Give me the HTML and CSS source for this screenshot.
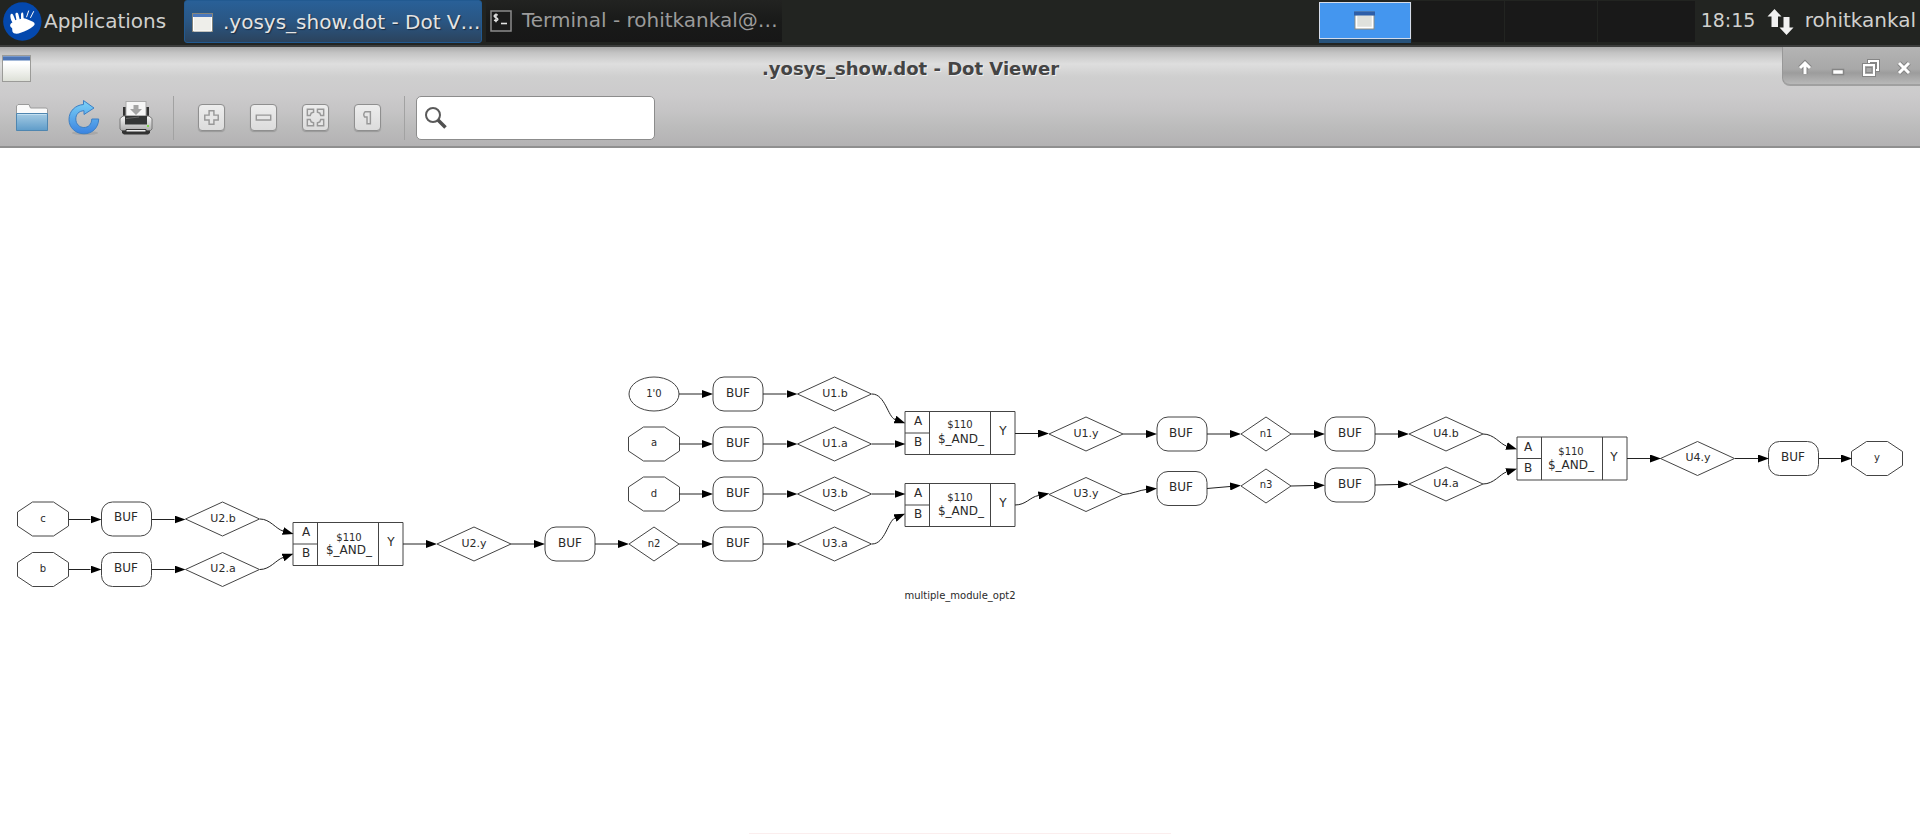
FILE: index.html
```
<!DOCTYPE html>
<html lang="en">
<head>
<meta charset="utf-8">
<title>.yosys_show.dot - Dot Viewer</title>
<link rel="stylesheet" href="styles.css">
</head>
<body>
<header class="panel">
  <button class="apps" type="button">
    <svg class="logo" width="39" height="39" viewBox="9 5 117 118" aria-hidden="true">
      <circle cx="67" cy="64" r="58" fill="#0448ad"/>
      <path d="M36 84C28 79 28 71 37 67C32 58 30 50 31 44C33 39 38 40 40 46L46 60L49 59L46 42C47 36 53 36 55 42L59 57L63 56L63 41C65 35 70 36 70 42L71 54C80 56 90 60 99 65C106 69 106 74 100 78C90 86 76 93 62 98C50 103 40 101 37 94Z" fill="#fff"/>
      <path d="M80 50L86 32M92 52L101 34" stroke="#fff" stroke-width="3" stroke-linecap="round"/>
    </svg>
    <span>Applications</span>
  </button>
  <nav class="tasks" aria-label="Windows">
    <button class="task task-active" type="button">
      <svg width="21" height="20" viewBox="0 0 21 20" aria-hidden="true"><rect x=".5" y=".5" width="20" height="18" fill="#eeeeea" stroke="#85857c"/><path d="M1 2.500h19" stroke="#4a78bd" stroke-width="3"/><path d="M1.500 4v14h18V4" fill="none" stroke="#fff"/></svg>
      <span class="task-label">.yosys_show.dot - Dot V…</span>
    </button>
    <button class="task" type="button">
      <svg width="22" height="22" viewBox="0 0 22 22" aria-hidden="true"><rect x="1" y="1" width="20" height="20" fill="#1b1b1b" stroke="#8c8c8c" stroke-width="1.500"/><path d="M7.800 5C5.500 4.200 4 5 4.200 6.300C4.500 8 7.800 7.400 7.900 9.200C7.900 10.700 5.800 11 4 10.200M6 3.500v8.800" fill="none" stroke="#e4e4e4" stroke-width="1.400"/><path d="M11 13.500h6" stroke="#e4e4e4" stroke-width="1.600"/></svg>
      <span class="task-label">Terminal - rohitkankal@…</span>
    </button>
  </nav>
  <div class="pager">
    <button class="desk desk-active" type="button" aria-label="Workspace 1">
      <svg width="21" height="19" viewBox="0 0 21 19" aria-hidden="true"><rect x="1" y="1" width="19" height="17" fill="#dfe1dc" stroke="#8b8b84"/><path d="M2.500 5v11.500h16V5" fill="none" stroke="#fff" stroke-width="1.500"/><path d="M0 2.500h21" stroke="#2d5ea8" stroke-width="4"/></svg>
    </button>
    <button class="desk" type="button" aria-label="Workspace 2"></button>
    <button class="desk" type="button" aria-label="Workspace 3"></button>
    <button class="desk desk-last" type="button" aria-label="Workspace 4"></button>
  </div>
  <time class="clock">18:15</time>
  <svg class="net" width="27" height="27" viewBox="0 0 27 27" aria-hidden="true"><path d="M7.500 0L14.500 7.500H11V18H4.500V7.500H.5ZM16.500 8H22.500V18.500H26.500L19.500 26L12.500 18.500H16.500Z" fill="#f1f1f1"/></svg>
  <span class="user">rohitkankal</span>
</header>

<div class="chrome">
  <div class="titlebar">
    <svg class="win-icon" width="29" height="27" viewBox="0 0 29 27" aria-hidden="true"><defs><linearGradient id="paper" x2="0" y2="1"><stop offset=".3" stop-color="#fff"/><stop offset="1" stop-color="#dcdfd6"/></linearGradient></defs><rect x=".5" y=".5" width="28" height="26" fill="url(#paper)" stroke="#9b9b98"/><path d="M1 3.500h27" stroke="#4b74b5" stroke-width="4"/><path d="M1 1.500h27" stroke="#7698cb"/></svg>
    <h1 class="title">.yosys_show.dot - Dot Viewer</h1>
    <div class="win-buttons">
      <button type="button" aria-label="Shade"><svg width="18" height="18" viewBox="0 0 18 18"><path class="halo" d="M9 15V5M4 9L9 4L14 9"/><path class="ink" d="M9 15V5M4 9L9 4L14 9"/></svg></button>
      <button type="button" aria-label="Minimize"><svg width="18" height="18" viewBox="0 0 18 18"><rect x="3.500" y="10.500" width="11" height="5" fill="#fff" stroke="#858585" stroke-width="1.500"/></svg></button>
      <button type="button" aria-label="Restore"><svg width="18" height="18" viewBox="0 0 18 18"><path d="M7 4V2H16V11H13.500" fill="none" stroke="#858585" stroke-width="4"/><path d="M7 4V2H16V11H13.500" fill="none" stroke="#fff" stroke-width="2"/><rect x="2" y="6" width="10" height="10" fill="#aaa" stroke="#858585" stroke-width="4"/><rect x="2" y="6" width="10" height="10" fill="#aaa" stroke="#fff" stroke-width="2"/><rect x="4" y="8.500" width="6" height="5" fill="none" stroke="#858585"/></svg></button>
      <button type="button" aria-label="Close"><svg width="18" height="18" viewBox="0 0 18 18"><path class="halo" d="M4 4L14 14M14 4L4 14"/><path class="ink" d="M4 4L14 14M14 4L4 14"/></svg></button>
    </div>
  </div>
  <div class="toolbar" role="toolbar">
    <button class="tool" type="button" aria-label="Open">
      <svg width="34" height="36" viewBox="0 0 34 36"><defs><linearGradient id="blue" x2="0" y2="1"><stop stop-color="#a5cbe3"/><stop offset="1" stop-color="#5f9cc9"/></linearGradient></defs><path d="M1.500 30V6L3 4.500H14L15.500 8H31.500L32.500 9.500V30Z" fill="#fafafa" stroke="#9a9a9a"/><path d="M1.500 13.500H32.500V30.500H1.500Z" fill="url(#blue)" stroke="#4f86b0"/><path d="M2.500 14.500H31.500" stroke="#c3dff0"/></svg>
    </button>
    <button class="tool" type="button" aria-label="Reload">
      <svg width="34" height="38" viewBox="0 0 34 38"><defs><linearGradient id="swirl" x2="0" y2="1"><stop stop-color="#7cd3f7"/><stop offset="1" stop-color="#3b83e0"/></linearGradient></defs><ellipse cx="18" cy="34" rx="13" ry="2" fill="#8f8f8f" opacity=".4"/><path d="M16.500 1.500L27 9L17 15.500V11.700C11.500 12 8.800 15.500 8.800 20C8.800 25 12.500 28.500 16.800 28.500C21.500 28.500 24.500 25.500 24.800 20H31.700C31.500 29 25 34.800 17 34.800C8.500 34.800 2 28.500 2 20.500C2 12 8.500 6 16.500 5.500Z" fill="url(#swirl)" stroke="#3c7fc4"/></svg>
    </button>
    <button class="tool" type="button" aria-label="Print">
      <svg width="34" height="36" viewBox="0 0 34 36"><defs><linearGradient id="body" x2="0" y2="1"><stop stop-color="#fafafa"/><stop offset="1" stop-color="#aaa"/></linearGradient></defs><path d="M4 7H8V17H4ZM26 7H30V17H26Z" fill="#333"/><rect x="7" y="1.500" width="20" height="17" fill="#f6f6f6" stroke="#aaa"/><path d="M14.500 5h5v4h3.500L17 15L11 9H14.500Z" fill="#a4a4a4"/><path d="M1 18.500L4 16H30L33 18.500V29L31 31H3L1 29Z" fill="url(#body)" stroke="#777"/><path d="M6 16H28V24.500H6Z" fill="#343636"/><path d="M7 18.500L20 17" stroke="#666"/><path d="M3 30.500H31V33L29 34.500H5L3 33Z" fill="#333"/><path d="M7 29.500H27V32H7Z" fill="#eee" stroke="#333"/><rect x="28" y="25" width="2" height="2" fill="#7fd84a"/></svg>
    </button>
    <span class="sep"></span>
    <button class="tool" type="button" aria-label="Zoom in"><span class="key"><svg width="26" height="26" viewBox="0 0 26 26"><path d="M10.500 6H15.500V10.500H20V15.500H15.500V20H10.500V15.500H6V10.500H10.500Z"/></svg></span></button>
    <button class="tool" type="button" aria-label="Zoom out"><span class="key"><svg width="26" height="26" viewBox="0 0 26 26"><path d="M5.500 10.500H20.500V15.500H5.500Z"/></svg></span></button>
    <button class="tool" type="button" aria-label="Zoom to fit"><span class="key"><svg width="26" height="26" viewBox="0 0 26 26"><path d="M4.500 4.500H11V7.500L8.500 8.500L7.500 11H4.500ZM21.500 4.500H15V7.500L17.500 8.500L18.500 11H21.500ZM4.500 21.500H11V18.500L8.500 17.500L7.500 15H4.500ZM21.500 21.500H15V18.500L17.500 17.500L18.500 15H21.500Z"/></svg></span></button>
    <button class="tool" type="button" aria-label="Zoom to normal size"><span class="key"><svg width="26" height="26" viewBox="0 0 26 26"><path d="M10.500 7H16V19.500H12.500V12.500H10C9 11 9 8.500 10.500 7Z"/></svg></span></button>
    <span class="sep"></span>
    <label class="search">
      <svg width="24" height="24" viewBox="0 0 24 24" aria-hidden="true"><circle cx="9" cy="9" r="7" fill="none" stroke="#5a5a5a" stroke-width="2"/><path d="M14 14L21.500 21.500" stroke="#505050" stroke-width="3.500"/></svg>
      <input type="search" aria-label="Find">
    </label>
  </div>
</div>

<main class="canvas">
<svg class="graph" viewBox="0 148 1920 684" role="img" aria-label="multiple_module_opt2">
  <defs>
    <path id="oct" d="M-10.500-17H10.500L25.500-7V7L10.500 17H-10.500L-25.500 7V-7Z"/>
    <rect id="buf" x="-25" y="-17" width="50" height="34" rx="11"/>
    <path id="dia" d="M-37 0L0-17L37 0L0 17Z"/>
    <path id="net" d="M-25 0L0-17L25 0L0 17Z"/>
    <path id="cell" d="M0-21.500H110V21.500H0ZM24.500-21.500V21.500M85.500-21.500V21.500M0 0H24.500"/>
    <marker id="arrow" markerUnits="userSpaceOnUse" markerWidth="11" markerHeight="8" refX="0" refY="4" orient="auto"><path d="M0 0L11 4L0 8Z" fill="#000"/></marker>
  </defs>

  <g class="shape">
    <use href="#oct" x="43" y="519"/><use href="#oct" x="43" y="569.500"/>
    <use href="#buf" x="126.500" y="519"/><use href="#buf" x="126.500" y="569.500"/>
    <use href="#dia" x="222.500" y="519"/><use href="#dia" x="222.500" y="569.500"/>
    <use href="#cell" x="293" y="544"/>
    <use href="#dia" x="474" y="544"/><use href="#buf" x="570" y="544"/><use href="#net" x="654" y="544"/>
    <ellipse cx="654" cy="394" rx="25" ry="17"/><use href="#oct" x="654" y="444"/><use href="#oct" x="654" y="494"/>
    <use href="#buf" x="738" y="394"/><use href="#buf" x="738" y="444"/><use href="#buf" x="738" y="494"/><use href="#buf" x="738" y="544"/>
    <use href="#dia" x="834.500" y="394"/><use href="#dia" x="834.500" y="444"/><use href="#dia" x="834.500" y="494"/><use href="#dia" x="834.500" y="544"/>
    <use href="#cell" x="905" y="433"/><use href="#cell" x="905" y="505"/>
    <use href="#dia" x="1086" y="434"/><use href="#dia" x="1086" y="494.500"/>
    <use href="#buf" x="1182" y="434"/><use href="#buf" x="1182" y="488.500"/>
    <use href="#net" x="1266" y="434"/><use href="#net" x="1266" y="486"/>
    <use href="#buf" x="1350" y="434"/><use href="#buf" x="1350" y="485"/>
    <use href="#dia" x="1446" y="434"/><use href="#dia" x="1446" y="484"/>
    <use href="#cell" x="1517" y="458.500"/>
    <use href="#dia" x="1697.500" y="458.500"/><use href="#buf" x="1793.500" y="458.500"/><use href="#oct" x="1877" y="458.500"/>
  </g>

  <g class="edge">
    <path d="M69 519.500H90.500"/><path d="M152 519.500H174.500"/>
    <path d="M69 569.500H90.500"/><path d="M152 569.500H174.500"/>
    <path d="M260 519C270 519 276 529 283 531"/><path d="M260 569.500C270 569.500 276 560 283 557.500"/>
    <path d="M403 544H426"/><path d="M511 544H534"/><path d="M595 544H618"/>
    <path d="M679 394H702"/><path d="M679 444H702"/><path d="M679 494H702"/><path d="M679 544H702"/>
    <path d="M763 394H786.500"/><path d="M763 444H786.500"/><path d="M763 494H786.500"/><path d="M763 544H786.500"/>
    <path d="M872 394C885 394 888 417 895 419.500"/><path d="M872 444H894.500"/><path d="M872 494H894.500"/><path d="M872 544C885 544 888 521 895 518"/>
    <path d="M1015 433.500H1038"/><path d="M1123 434H1146"/><path d="M1207 434H1230"/><path d="M1291 434H1314"/><path d="M1375 434H1398"/>
    <path d="M1015 505C1026 505 1030 497 1038.500 495.500"/><path d="M1123 494.500C1132 494 1140 490 1146 489.500"/><path d="M1207 488.500L1230 486.500"/><path d="M1291 486L1314 485.500"/><path d="M1375 485L1398 484.500"/>
    <path d="M1483 434C1494 434 1500 444 1506.500 446"/><path d="M1483 484C1494 484 1500 474 1506.500 472"/>
    <path d="M1627 458.500H1650"/><path d="M1735 458.500H1758"/><path d="M1819 458.500H1841"/>
  </g>

  <g class="t12">
    <text x="126" y="521">BUF</text><text x="126" y="572">BUF</text><text x="570" y="547">BUF</text>
    <text x="738" y="397">BUF</text><text x="738" y="447">BUF</text><text x="738" y="497">BUF</text><text x="738" y="547">BUF</text>
    <text x="1181" y="437">BUF</text><text x="1181" y="491">BUF</text><text x="1350" y="437">BUF</text><text x="1350" y="488">BUF</text><text x="1793" y="461">BUF</text>
    <text x="306" y="536">A</text><text x="306" y="557">B</text><text x="349" y="554">$_AND_</text><text x="391" y="546">Y</text>
    <text x="918" y="425">A</text><text x="918" y="446">B</text><text x="961" y="443">$_AND_</text><text x="1003" y="435">Y</text>
    <text x="918" y="497">A</text><text x="918" y="518">B</text><text x="961" y="515">$_AND_</text><text x="1003" y="507">Y</text>
    <text x="1528" y="451">A</text><text x="1528" y="472">B</text><text x="1571" y="469">$_AND_</text><text x="1614" y="461">Y</text>
  </g>
  <g class="t11">
    <text x="223" y="522">U2.b</text><text x="223" y="572">U2.a</text><text x="474" y="547">U2.y</text>
    <text x="835" y="397">U1.b</text><text x="835" y="447">U1.a</text><text x="835" y="497">U3.b</text><text x="835" y="547">U3.a</text>
    <text x="1086" y="437">U1.y</text><text x="1086" y="497">U3.y</text>
    <text x="1446" y="437">U4.b</text><text x="1446" y="487">U4.a</text><text x="1698" y="461">U4.y</text>
  </g>
  <g class="t10">
    <text x="43" y="522">c</text><text x="43" y="572">b</text><text x="654" y="547">n2</text>
    <text x="654" y="397">1'0</text><text x="654" y="446">a</text><text x="654" y="497">d</text>
    <text x="1266" y="437">n1</text><text x="1266" y="488">n3</text><text x="1877" y="461">y</text>
    <text x="349" y="541">$110</text><text x="960" y="428">$110</text><text x="960" y="501">$110</text><text x="1571" y="455">$110</text>
    <text x="960" y="599">multiple_module_opt2</text>
  </g>
</svg>
<div class="edge-glow"></div>
</main>
</body>
</html>
```
FILE: styles.css
```
* { box-sizing: border-box; }

body {
  margin: 0;
  min-height: 100vh;
  display: flex;
  flex-direction: column;
  background: #fff;
  font-family: "DejaVu Sans", sans-serif;
  font-size: 20px;
}

button {
  margin: 0;
  padding: 0;
  border: 0;
  background: none;
  font: inherit;
  color: inherit;
}

svg { display: block; flex: none; }

.panel {
  display: flex;
  height: 47px;
  padding-right: 4px;
  background: #222421;
  border-bottom: 2px solid #3c3d3c;
  color: #d0d0ce;
  line-height: 40px;
}

.apps {
  display: flex;
  align-items: center;
  gap: 2px;
  width: 184px;
  padding-left: 3px;
  height: 43px;
}

.apps span { height: 42px; }

.tasks { display: flex; flex: 1; gap: 4px; min-width: 0; }

.task {
  display: flex;
  align-items: center;
  gap: 10px;
  width: 296px;
  height: 42px;
  padding-left: 4px;
  background: linear-gradient(#222321, #191a19 50%, #171717);
  color: #9b9b9b;
  white-space: nowrap;
}

.task-active {
  width: 298px;
  height: 43px;
  padding: 2px 0 0 7px;
  background: linear-gradient(#296098, #2a5683 50%, #2b435d);
  border: 1px solid #225a91;
  border-radius: 3px;
  color: #e4e4e4;
  text-shadow: 1px 1px 1px #1a2c40;
}

.task-label { height: 42px; }

.pager { display: flex; gap: 1px; height: 42px; padding-top: 1px; margin-right: 6px; }

.desk { width: 92px; background: #191919; }
.desk-last { width: 97px; }

.desk-active {
  display: flex;
  align-items: center;
  justify-content: center;
  height: 37px;
  margin-top: 1px;
  background: #4496ef;
  border: 1px solid #d5dcea;
  box-shadow: 0 4px 0 #27527a;
}

.clock { width: 66px; font-size: 19px; }
.net { margin: 9px 11px 0 0; }

.chrome {
  background: linear-gradient(#a9a9a9, #c4c4c4 6%, #dedede 17%, #cfcfcf 30%, #cccbcc 48%, #c5c4c5 65%, #bcbcbc 80%, #b3b2b3);
  border-bottom: 2px solid #8f8f8f;
}

.titlebar { display: flex; height: 48px; }
.win-icon { margin: 8px 8px 0 2px; }

.title {
  flex: 1;
  margin: 0;
  font-size: 18px;
  line-height: 44px;
  text-align: center;
  color: #444;
  text-shadow: 1px 1px 0 #eee;
}

.win-buttons {
  display: flex;
  height: 39px;
  padding: 0 0 0 5px;
  background: linear-gradient(#b4b4b4, #a8a8a8 60%, #9c9c9c 70%, #b8b8b8);
  border-left: 1px solid #989898;
  border-bottom: 2px solid #a0a0a0;
  border-bottom-left-radius: 8px;
}

.win-buttons button {
  display: flex;
  align-items: center;
  justify-content: center;
  width: 33px;
  padding-top: 4px;
}

.halo { fill: none; stroke: #858585; stroke-width: 5; }
.ink { fill: none; stroke: #fff; stroke-width: 3; }

.toolbar { display: flex; align-items: center; height: 51px; padding: 0 0 6px 6px; }

.tool {
  display: flex;
  align-items: center;
  justify-content: center;
  width: 52px;
  height: 44px;
}

.key {
  border: 1px solid #8f8f8f;
  border-radius: 4px;
  background: linear-gradient(#ededed, #dcdcdc);
  box-shadow: 0 1px 1px #999;
}

.key svg { width: 25px; height: 25px; }
.key path { fill: #e6e6e6; stroke: #989898; stroke-width: 1.5; }

.sep { width: 1px; height: 44px; margin: 0 11px; background: #a2a2a2; }

.search {
  display: flex;
  align-items: center;
  width: 239px;
  height: 44px;
  padding-left: 7px;
  background: #fff;
  border: 1px solid #8c8c8c;
  border-radius: 5px;
}

.search input {
  flex: 1;
  min-width: 0;
  height: 100%;
  margin: 0 6px;
  padding: 0;
  border: 0;
  outline: 0;
  background: none;
  font: inherit;
}

.canvas {
  flex: 1;
  display: flex;
  flex-direction: column;
  justify-content: space-between;
  align-items: center;
  background: #fff;
}

.graph { width: 100%; height: auto; }
.shape { fill: none; stroke: #444; stroke-width: 1; }
.edge { fill: none; stroke: #222; stroke-width: 1; }
.edge path { marker-end: url(#arrow); }
.t12, .t11, .t10 { fill: #2a2a2a; text-anchor: middle; }
.t12 { font-size: 12px; }
.t11 { font-size: 11px; }
.t10 { font-size: 10px; }

.edge-glow { width: 22%; height: 1px; background: #fbeeee; }
```
